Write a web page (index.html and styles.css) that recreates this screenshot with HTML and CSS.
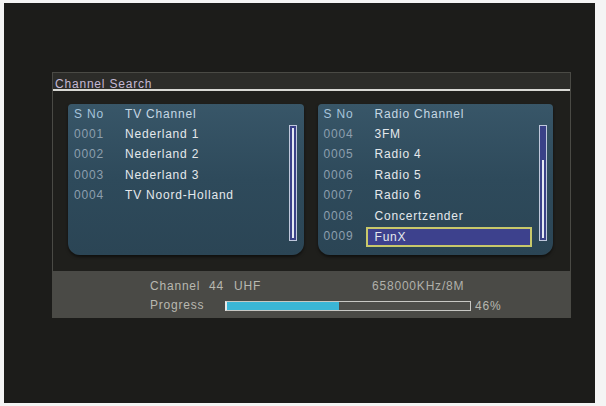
FILE: index.html
```html
<!DOCTYPE html>
<html>
<head>
<meta charset="utf-8">
<title>Channel Search</title>
<link rel="stylesheet" href="styles.css">
</head>
<body>
<div class="screen">
  <div class="window">
    <div class="titlebar">Channel Search</div>
    <div class="content">
      <div class="panel">
        <div class="list">
          <div class="row head"><span class="num">S No</span><span class="name">TV Channel</span></div>
          <div class="row"><span class="num">0001</span><span class="name">Nederland 1</span></div>
          <div class="row"><span class="num">0002</span><span class="name">Nederland 2</span></div>
          <div class="row"><span class="num">0003</span><span class="name">Nederland 3</span></div>
          <div class="row"><span class="num">0004</span><span class="name">TV Noord-Holland</span></div>
        </div>
        <div class="scrollbar"><div class="thumb full"></div></div>
      </div>
      <div class="panel">
        <div class="list">
          <div class="row head"><span class="num">S No</span><span class="name">Radio Channel</span></div>
          <div class="row"><span class="num">0004</span><span class="name">3FM</span></div>
          <div class="row"><span class="num">0005</span><span class="name">Radio 4</span></div>
          <div class="row"><span class="num">0006</span><span class="name">Radio 5</span></div>
          <div class="row"><span class="num">0007</span><span class="name">Radio 6</span></div>
          <div class="row"><span class="num">0008</span><span class="name">Concertzender</span></div>
          <div class="row"><span class="num">0009</span><span class="name selected">FunX</span></div>
        </div>
        <div class="scrollbar"><div class="thumb part"></div></div>
      </div>
    </div>
    <div class="status">
      <div class="srow">
        <span class="s-label">Channel</span><span class="s-ch">44</span><span class="s-band">UHF</span><span class="s-freq">658000KHz/8M</span>
      </div>
      <div class="srow">
        <span class="s-label wide">Progress</span>
        <div class="bar"><div class="fill" style="width:46%"></div></div>
        <span class="pct">46%</span>
      </div>
    </div>
  </div>
</div>
</body>
</html>
```

FILE: styles.css
```css
html, body {
  margin: 0;
  padding: 0;
  background: #f4f4f4;
}
body {
  width: 606px;
  height: 406px;
  overflow: hidden;
  font-family: "Liberation Sans", Arial, sans-serif;
  font-size: 12px;
  letter-spacing: 0.8px;
}
.screen {
  margin: 3px 0 0 4px;
  width: 591px;
  height: 400px;
  background: #1c1c1a;
  padding-top: 69px;
  padding-left: 48px;
  box-sizing: border-box;
}
.window {
  width: 519px;
  height: 246px;
  box-sizing: border-box;
  border: 1px solid #4a4a45;
  background: #1f1f1c;
  display: flex;
  flex-direction: column;
}
.titlebar {
  height: 18px;
  padding-left: 2px;
  padding-top: 4px;
  box-sizing: border-box;
  line-height: 14px;
  color: #c4b8d4;
  background: #2c2c29;
  border-bottom: 2px solid #d8d8d4;
}
.content {
  display: flex;
  gap: 14px;
  padding: 13px 17px 16px 15px;
  height: 180px;
  box-sizing: border-box;
}
.panel {
  flex: 1;
  height: 151px;
  display: flex;
  border-radius: 4px 4px 12px 12px;
  background: linear-gradient(#385668, #2e4a5b 50%, #2b4555);
  box-shadow: 0 2px 3px rgba(0, 0, 0, 0.5);
}
.list {
  width: 214px;
}
.row {
  display: flex;
  height: 20.4px;
  line-height: 20.4px;
}
.row.head {
  height: 20px;
  line-height: 20px;
}
.num {
  width: 48px;
  padding-left: 6px;
  box-sizing: border-box;
  color: #8d9fae;
}
.name {
  flex: 1;
  padding-left: 9px;
  color: #e4e8ec;
}
.head .num {
  color: #a6c4dc;
}
.head .name {
  color: #c6d8e4;
}
.name.selected {
  background: #3d418d;
  border: 2px solid #c8c86a;
  padding-left: 7px;
  line-height: 16.4px;
  box-sizing: border-box;
  margin-top: 1px;
  height: 20px;
}
.scrollbar {
  margin-top: 21px;
  margin-left: 7px;
  width: 8px;
  height: 116px;
  box-sizing: border-box;
  border: 1px solid #c0c8dc;
  background: #3a4188;
  display: flex;
  flex-direction: column;
  justify-content: flex-end;
  align-items: center;
}
.thumb {
  width: 2px;
  background: #e4e9f2;
  margin-bottom: 2px;
}
.thumb.full {
  height: 110px;
}
.thumb.part {
  height: 78px;
}
.status {
  flex: 1;
  background: #4a4a46;
  padding: 5px 0 0 97px;
  color: #b8b8b0;
}
.srow {
  display: flex;
  align-items: center;
  height: 19px;
}
.s-label {
  width: 59px;
}
.s-label.wide {
  width: 75px;
}
.s-ch {
  width: 25px;
}
.s-band {
  width: 138px;
}
.s-freq {
  color: #b0b0aa;
}
.bar {
  width: 246px;
  height: 10px;
  margin-top: 3px;
  box-sizing: border-box;
  border: 1px solid #c8c8c4;
  border-left: 2px solid #e8e8e8;
  background: #4e4e4a;
}
.fill {
  height: 100%;
  background: #3bb6d6;
}
.pct {
  margin-left: 4px;
  margin-top: 3px;
}
```
